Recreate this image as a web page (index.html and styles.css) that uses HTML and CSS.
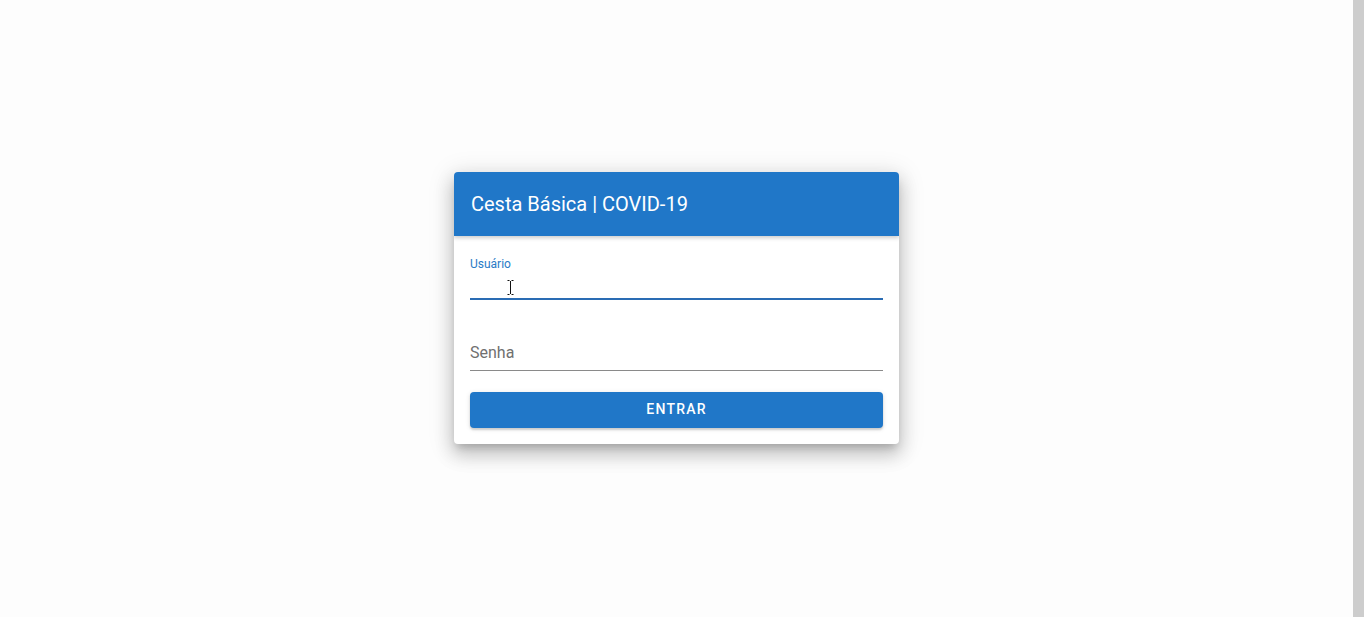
FILE: index.html
```html
<!DOCTYPE html>
<html lang="pt">
<head>
<meta charset="utf-8">
<title>Cesta Básica | COVID-19</title>
<link rel="stylesheet" href="styles.css">
</head>
<body>
<div class="page">
  <main class="main">
    <div class="card">
      <div class="card-header">Cesta Básica | COVID-19</div>
      <form class="card-body">
        <div class="field field-focused">
          <label class="field-label">Usuário</label>
          <div class="field-input"></div>
          <svg class="cursor" width="7" height="15" viewBox="0 0 7 15"><path d="M0.5 0.5h2M4.5 0.5h2M3.5 1v13M0.5 14.5h2M4.5 14.5h2" stroke="#111" stroke-width="1" fill="none"/></svg>
        </div>
        <div class="field">
          <div class="field-placeholder">Senha</div>
        </div>
        <button type="button" class="btn">ENTRAR</button>
      </form>
    </div>
  </main>
  <div class="scrollbar"></div>
</div>
</body>
</html>
```
FILE: styles.css
```css
html, body {
  margin: 0;
  padding: 0;
  height: 100%;
}
body {
  font-family: Roboto, "Liberation Sans", Arial, sans-serif;
  background: #fdfdfd;
}
.page {
  display: flex;
  height: 617px;
}
.main {
  flex: 1;
  display: flex;
  align-items: center;
  justify-content: center;
  padding-bottom: 1px;
}
.scrollbar {
  width: 11px;
  background: #cdcdcd;
}
.card {
  width: 445px;
  background: #fff;
  border-radius: 4px;
  box-shadow: 0 10px 18px 2px rgba(0,0,0,0.16), 0 4px 24px 4px rgba(0,0,0,0.10), 0 6px 8px -3px rgba(0,0,0,0.18);
  overflow: hidden;
}
.card-header {
  height: 64px;
  background: #2077c8;
  color: #fff;
  font-size: 20px;
  line-height: 64px;
  padding: 0 17px;
  box-shadow: 0 2px 4px rgba(0,0,0,0.2);
  position: relative;
}
.card-body {
  margin: 0;
  padding: 16px 16px 16px 16px;
  display: flex;
  flex-direction: column;
}
.field {
  position: relative;
  height: 49px;
  box-sizing: border-box;
  border-bottom: 1px solid #8a8a8a;
  display: flex;
  flex-direction: column;
}
.field-focused {
  height: 48px;
  border-bottom: 2px solid #2a6cb4;
}
.field-label {
  font-size: 12px;
  line-height: 16px;
  color: #2a7bc6;
  margin-top: 4px;
}
.cursor {
  position: absolute;
  left: 37px;
  top: 28px;
}
.field + .field {
  margin-top: 22px;
}
.field-placeholder {
  margin-top: auto;
  font-size: 16px;
  line-height: 20px;
  color: #707070;
  padding-bottom: 7px;
}
.btn {
  margin-top: 21px;
  height: 36px;
  padding: 0 0 2px 0;
  border: none;
  border-radius: 4px;
  background: #2077c8;
  color: #fff;
  font-family: Roboto, "Liberation Sans", Arial, sans-serif;
  font-size: 14px;
  font-weight: 500;
  letter-spacing: 1.2px;
  box-shadow: 0 2px 2px rgba(0,0,0,0.14), 0 1px 5px rgba(0,0,0,0.12);
  cursor: pointer;
}
```
